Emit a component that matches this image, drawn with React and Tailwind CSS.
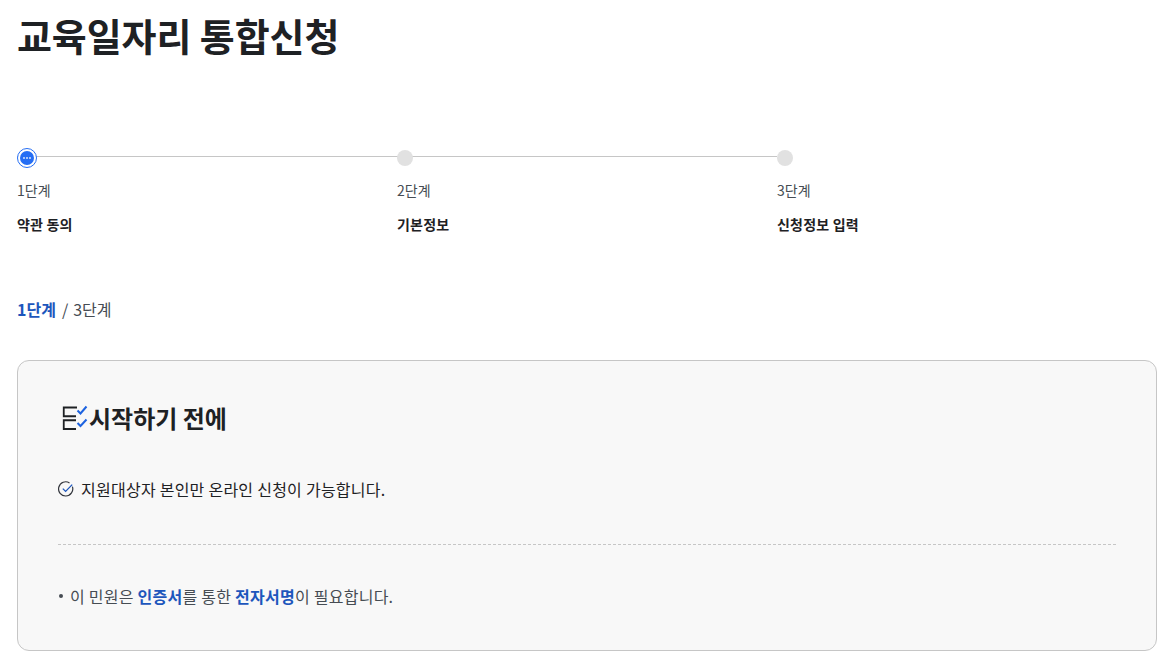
const FONT = "font-['Noto_Sans_CJK_KR','Noto_Sans',sans-serif]";

const steps = [
  { num: '1단계', label: '약관 동의', active: true },
  { num: '2단계', label: '기본정보' },
  { num: '3단계', label: '신청정보 입력' },
];

function ListCheckIcon() {
  return (
    <svg width="28" height="28" viewBox="0 0 28 28" fill="none" className="shrink-0">
      <path d="M16 3.5H2.75V12.25H15" stroke="#1e2124" strokeWidth="1.8" />
      <path d="M15 16.25H2.75V25H15" stroke="#1e2124" strokeWidth="1.8" />
      <path d="M16.5 6.5l3 3 6-7M16.5 19l3 3 6-6.5" stroke="#1d63e0" strokeWidth="2" />
    </svg>
  );
}

function CircleCheckIcon() {
  return (
    <svg width="16" height="16" viewBox="0 0 16 16" fill="none" className="shrink-0">
      <path d="M14.4 5.6A7.1 7.1 0 1 1 11.5 1.9" stroke="#33363d" strokeWidth="1.2" />
      <path d="M4.8 7.6l2.8 2.8L14.2 3.6" stroke="#1d56bc" strokeWidth="1.3" />
    </svg>
  );
}

function Step({ step, last }) {
  return (
    <div className="w-[380px]">
      <div className="relative flex h-5 items-center">
        {!last && <div className="absolute left-0 right-0 top-[8px] h-px bg-[#c6c6c6]" />}
        {step.active ? (
          <div className="relative flex h-5 w-5 items-center justify-center rounded-full border-[1.5px] border-[#256ef4] bg-white">
            <div className="flex h-[14px] w-[14px] items-center justify-center gap-px rounded-full bg-[#256ef4]">
              <span className="h-[2px] w-[2px] rounded-full bg-white/80" />
              <span className="h-[2px] w-[2px] rounded-full bg-white/80" />
              <span className="h-[2px] w-[2px] rounded-full bg-white/80" />
            </div>
          </div>
        ) : (
          <div className="relative h-4 w-4 rounded-full bg-[#e1e1e1]" />
        )}
      </div>
      <p className="mt-3 text-[14px] leading-[20px] text-[#464c53]">{step.num}</p>
      <p className="mt-[14px] text-[14px] font-bold leading-[20px] tracking-[0.2px] text-[#1e2124]">{step.label}</p>
    </div>
  );
}

export default function App() {
  return (
    <div className={`${FONT} h-[662px] overflow-hidden bg-white pl-[17px] pr-4 text-[#1e2124]`}>
      <h1 className="pt-[10px] text-[38px] font-bold leading-[50px] tracking-[-0.1px]">교육일자리 통합신청</h1>

      <div className="mt-[88px] flex">
        {steps.map((step, i) => (
          <Step key={step.label} step={step} last={i === steps.length - 1} />
        ))}
      </div>

      <p className="mt-[63px] flex items-center text-[16px] leading-[24px] text-[#464c53]">
        <b className="font-bold text-[#1d56bc]">1단계</b>
        <span className="ml-[6px] mr-[5px]">/</span>
        <span>3단계</span>
      </p>

      <section className="mt-[39px] h-[291px] w-[1140px] rounded-xl border border-[#c6c6c6] bg-[#f8f8f8] px-10 pt-[43px]">
        <div className="flex items-center">
          <span className="ml-[3px] flex"><ListCheckIcon /></span>
          <h2 className="text-[24px] font-bold leading-[28px]">시작하기 전에</h2>
        </div>

        <div className="mt-[45px] flex items-center gap-[7px]">
          <CircleCheckIcon />
          <p className="text-[16px] leading-[24px] tracking-[0.25px]">지원대상자 본인만 온라인 신청이 가능합니다.</p>
        </div>

        <div className="mt-[43px] border-t border-dashed border-[#c6c6c6]" />

        <div className="mt-[39px] flex items-center text-[16px] leading-[24px] tracking-[0.25px] text-[#464c53]">
          <span className="ml-px mr-[7px] h-1 w-1 rounded-full bg-[#464c53]" />
          <p>
            이 민원은 <b className="font-bold text-[#1d56bc]">인증서</b>를 통한{' '}
            <b className="font-bold text-[#1d56bc]">전자서명</b>이 필요합니다.
          </p>
        </div>
      </section>
    </div>
  );
}
